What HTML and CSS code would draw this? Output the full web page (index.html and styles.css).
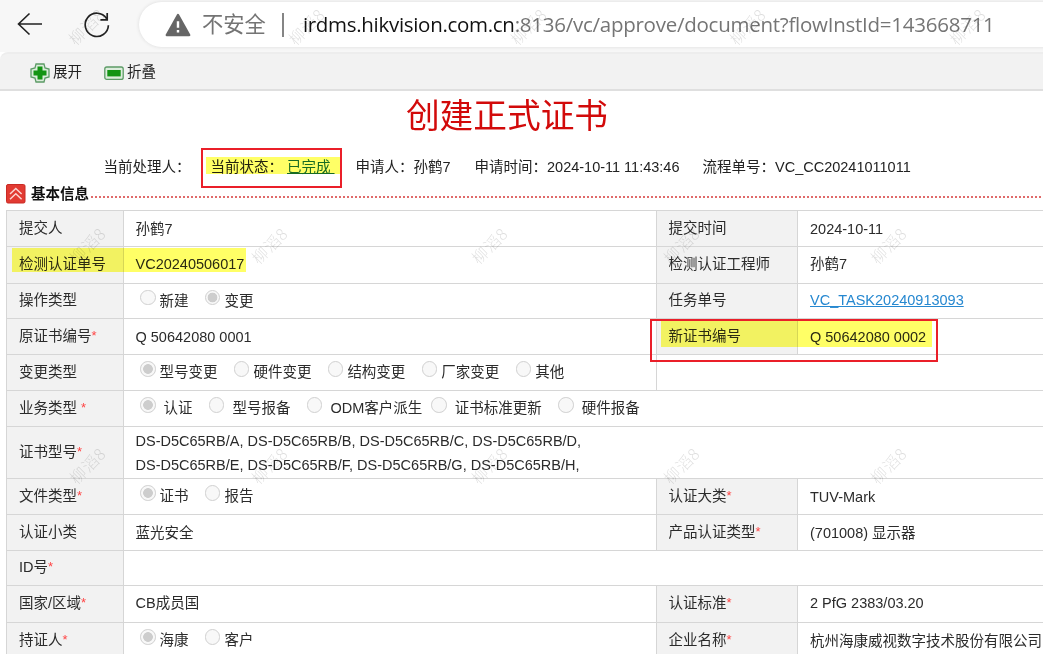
FILE: index.html
```html
<!DOCTYPE html>
<html lang="zh-CN">
<head>
<meta charset="utf-8">
<title>创建正式证书</title>
<link rel="stylesheet" href="styles.css">
</head>
<body>
<header class="browser">
  <svg class="back" width="26" height="24" viewBox="0 0 26 24"><path d="M25 12H1.5M12.5 1.5L1.5 12L12.5 22.5" fill="none" stroke="#222" stroke-width="1.6"/></svg>
  <svg class="reload" width="28" height="28" viewBox="0 0 28 28"><path d="M23.6 7.6A11.6 11.6 0 1 0 25.4 14.2M24.2 2V8.8H17.4" fill="none" stroke="#222" stroke-width="1.7"/></svg>
  <div class="address">
    <svg class="warn" width="26" height="24" viewBox="0 0 26 24"><path d="M13 2L24.2 22H1.8Z" fill="#666" stroke="#666" stroke-width="2.4" stroke-linejoin="round"/><path d="M13 8.3V14.8M13 17V19.6" stroke="#fff" stroke-width="2.4"/></svg>
    <span class="insecure">不安全</span>
    <span class="bar"></span>
    <span class="url"><b>irdms.hikvision.com.cn</b>:8136/vc/approve/document?flowInstId=143668711</span>
  </div>
</header>
<nav class="toolbar">
  <span class="tool"><svg width="20" height="20" viewBox="0 0 20 20"><path d="M6 1H14L15 5L19 6V14L15 15L14 19H6L5 15L1 14V6L5 5Z" fill="#dcecdc" stroke="#5c9b66" stroke-width="1.3"/><path d="M7.5 3.5H12.5V7.5H16.5V12.5H12.5V16.5H7.5V12.5H3.5V7.5H7.5Z" fill="#139413"/></svg>展开</span>
  <span class="tool"><svg width="20" height="20" viewBox="0 0 20 20"><rect x=".8" y="4" width="18.4" height="12.4" rx="2" fill="#dcecdc" stroke="#5c9b66" stroke-width="1.3"/><rect x="3.3" y="7" width="13.4" height="6.4" fill="#139413"/></svg>折叠</span>
</nav>
<h1>创建正式证书</h1>
<div class="status">
  <span class="handler">当前处理人：</span>
  <span class="state">当前状态：<a>已完成&nbsp;</a></span>
  <span class="applicant">申请人：孙鹤7</span>
  <span class="applied">申请时间：2024-10-11 11:43:46</span>
  <span>流程单号：VC_CC20241011011</span>
</div>
<div class="section">
  <svg width="20" height="20" viewBox="0 0 20 20"><rect x=".5" y=".5" width="18.5" height="18.5" rx="1.5" fill="#e23a32" stroke="#c92b25"/><path d="M4 10L9.8 4.5L15.6 10M4 15.2L9.8 9.7L15.6 15.2" fill="none" stroke="#fbd5d2" stroke-width="1.5"/></svg>
  <b>基本信息</b><i></i>
</div>
<main class="form">
  <div class="row"><label>提交人</label><p>孙鹤7</p><label>提交时间</label><p>2024-10-11</p></div>
  <div class="row h37"><label>检测认证单号</label><p>VC20240506017</p><label>检测认证工程师</label><p>孙鹤7</p></div>
  <div class="row h35"><label>操作类型</label><p class="radios"><span>新建</span><span class="on">变更</span></p><label>任务单号</label><p><a>VC_TASK20240913093</a></p></div>
  <div class="row"><label>原证书编号<em>*</em></label><p>Q 50642080 0001</p><label>新证书编号</label><p>Q 50642080 0002</p></div>
  <div class="row"><label>变更类型</label><p class="radios"><span class="on">型号变更</span><span>硬件变更</span><span>结构变更</span><span>厂家变更</span><span>其他</span></p><p class="rest"></p></div>
  <div class="row"><label>业务类型&nbsp;<em>*</em></label><p class="radios loose"><span class="on">认证</span><span>型号报备</span><span class="tight">ODM客户派生</span><span>证书标准更新</span><span>硬件报备</span></p></div>
  <div class="row h52"><label>证书型号<em>*</em></label><p class="models">DS-D5C65RB/A, DS-D5C65RB/B, DS-D5C65RB/C, DS-D5C65RB/D,<br>DS-D5C65RB/E, DS-D5C65RB/F, DS-D5C65RB/G, DS-D5C65RB/H,</p></div>
  <div class="row"><label>文件类型<em>*</em></label><p class="radios"><span class="on">证书</span><span>报告</span></p><label>认证大类<em>*</em></label><p>TUV-Mark</p></div>
  <div class="row"><label>认证小类</label><p>蓝光安全</p><label>产品认证类型<em>*</em></label><p>(701008) 显示器</p></div>
  <div class="row h35"><label>ID号<em>*</em></label><p></p></div>
  <div class="row h37"><label>国家/区域<em>*</em></label><p>CB成员国</p><label>认证标准<em>*</em></label><p>2 PfG 2383/03.20</p></div>
  <div class="row"><label>持证人<em>*</em></label><p class="radios"><span class="on">海康</span><span>客户</span></p><label>企业名称<em>*</em></label><p>杭州海康威视数字技术股份有限公司</p></div>
</main>
<div class="mark mark-state"></div>
<div class="mark mark-number"></div>
<div class="mark mark-cert"></div>
<div class="box box-state"></div>
<div class="box box-cert"></div>
<svg class="watermarks" width="1043" height="654">
  <g transform="translate(86 26) rotate(-45)"><text>柳滔8</text></g>
  <g transform="translate(306 26) rotate(-45)"><text>柳滔8</text></g>
  <g transform="translate(528 26) rotate(-45)"><text>柳滔8</text></g>
  <g transform="translate(747 26) rotate(-45)"><text>柳滔8</text></g>
  <g transform="translate(967 26) rotate(-45)"><text>柳滔8</text></g>
  <g transform="translate(87 245) rotate(-45)"><text>柳滔8</text></g>
  <g transform="translate(269 245) rotate(-45)"><text>柳滔8</text></g>
  <g transform="translate(489 245) rotate(-45)"><text>柳滔8</text></g>
  <g transform="translate(681 245) rotate(-45)"><text>柳滔8</text></g>
  <g transform="translate(888 245) rotate(-45)"><text>柳滔8</text></g>
  <g transform="translate(87 465) rotate(-45)"><text>柳滔8</text></g>
  <g transform="translate(269 465) rotate(-45)"><text>柳滔8</text></g>
  <g transform="translate(489 465) rotate(-45)"><text>柳滔8</text></g>
  <g transform="translate(681 465) rotate(-45)"><text>柳滔8</text></g>
  <g transform="translate(888 465) rotate(-45)"><text>柳滔8</text></g>
</svg>
</body>
</html>
```
FILE: styles.css
```css
*, ::before { box-sizing: border-box; }
body {
  position: relative;
  margin: 0;
  width: 1043px;
  height: 654px;
  overflow: hidden;
  background: #fff;
  color: #2b2b2b;
  font: 14.5px/20px "Liberation Sans", "Noto Sans CJK SC", sans-serif;
  white-space: nowrap;
}
svg { display: block; flex: none; }
.browser {
  display: flex;
  height: 52px;
  padding-top: 2px;
  background: #f7f7f7;
}
.back { margin: 10px 0 0 17px; }
.reload { margin: 9px 0 0 40px; }
.address {
  display: flex;
  align-items: center;
  width: 940px;
  height: 45px;
  margin-left: 28px;
  padding-left: 26px;
  flex: none;
  border-radius: 23px 0 0 23px;
  background: #fff;
  box-shadow: 0 0 3px 1px #e6e6e6;
}
.insecure { margin-left: 11px; font-size: 21.3px; color: #747474; }
.bar { width: 2px; height: 24px; margin: 0 19px 0 16px; background: #858585; }
.url {
  padding-bottom: 2px;
  font: 20.5px/30px "Open Sans", "Noto Sans", sans-serif;
  letter-spacing: -0.25px;
  color: #757575;
}
.url b { font-weight: 400; letter-spacing: -0.3px; color: #111; }
.toolbar {
  display: flex;
  gap: 22px;
  height: 39px;
  padding: 9px 0 0 30px;
  border-top: 2px solid #ededed;
  border-bottom: 2px solid #dfdfdf;
  border-top-left-radius: 8px;
  background: #f2f2f2;
}
.tool { display: flex; gap: 3px; height: 20px; line-height: 19px; color: #222; }
h1 {
  height: 56px;
  margin: 0;
  padding-right: 29px;
  font-size: 33.7px;
  font-weight: 400;
  line-height: 51px;
  text-align: center;
  color: #d20a0a;
}
.status { display: flex; height: 37px; padding: 10px 0 0 103.5px; color: #222; }
.handler { width: 107px; }
.state { width: 145px; }
.state a { margin-left: 4px; color: #176b57; text-decoration: underline; }
.applicant { width: 119px; }
.applied { width: 228px; }
.section { display: flex; height: 26px; padding-left: 6px; color: #111; }
.section b { margin-left: 5px; }
.section i {
  flex: 1;
  height: 2px;
  margin: 12px 0 0 2px;
  background: repeating-linear-gradient(90deg, #e06a6a 0 2px, #fff 2px 4px);
}
.form { border-left: 1px solid #d6d6d6; margin-left: 6px; }
.row { display: flex; height: 36px; border-top: 1px solid #d6d6d6; }
.h35 { height: 35px; }
.h37 { height: 37px; }
.h52 { height: 52px; }
.row > * { display: flex; align-items: center; margin: 0; padding-left: 12px; }
.row label { width: 117px; padding-bottom: 1px; border-right: 1px solid #d6d6d6; background: #f2f2f2; }
.row p { flex: 1; padding-left: 11.5px; }
.row p + label { width: 142px; padding-left: 11.5px; }
.row label:nth-child(3) ~ p { flex: none; width: 245px; padding-left: 12px; }
.row label:nth-child(3), .rest { border-left: 1px solid #d6d6d6; }
.row .rest { flex: none; width: 387px; }
.h35 label, .h37 label { padding-bottom: 3px; }
.h35 p, .h37 p { padding-bottom: 2px; }
.row em { font-size: 13px; font-style: normal; color: #ff4545; }
.row a { color: #2688d0; text-decoration: underline; }
.row .models { line-height: 24px; }
.row .radios { padding: 0 0 1px 16px; }
.radios span { display: flex; gap: 4px; margin-right: 16.3px; }
.radios span::before {
  content: "";
  width: 15.6px;
  height: 15.6px;
  margin-top: -1px;
  flex: none;
  border: 1.5px solid #d0d0d0;
  border-radius: 50%;
  background: #f8f8f8;
}
.radios .on::before { background: radial-gradient(circle, #cdcdcd 0 4.5px, #f8f8f8 5.2px); }
.radios.loose span { gap: 8px; }
.radios.loose .tight { margin-right: 9px; }
.mark { position: absolute; background: #ffff66; mix-blend-mode: multiply; }
.mark-state { left: 206px; top: 157px; width: 134px; height: 17px; }
.mark-number { left: 12px; top: 248px; width: 234px; height: 24px; }
.mark-cert { left: 661px; top: 321px; width: 271px; height: 26px; }
.box { position: absolute; border: 2px solid #ea1f29; }
.box-state { left: 201px; top: 148px; width: 141px; height: 40px; }
.box-cert { left: 650px; top: 319px; width: 288px; height: 43px; }
.watermarks { position: absolute; left: 0; top: 0; pointer-events: none; }
.watermarks text {
  font: 300 16px "Noto Sans CJK SC", sans-serif;
  letter-spacing: 0.8px;
  text-anchor: middle;
  dominant-baseline: central;
  fill: #000;
  fill-opacity: 0.13;
}
```
